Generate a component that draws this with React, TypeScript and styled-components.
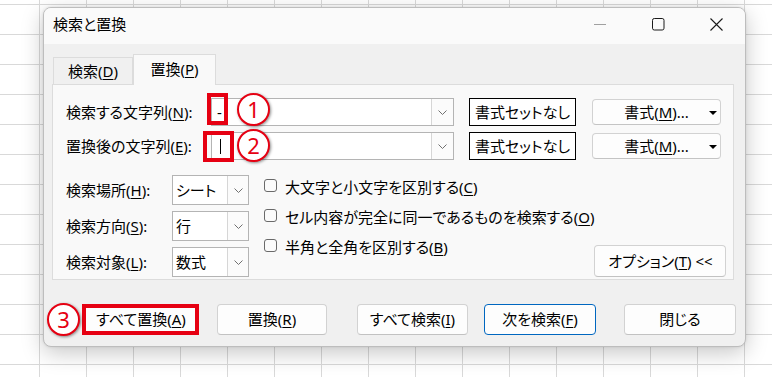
import styled, { createGlobalStyle } from 'styled-components'

const GlobalStyle = createGlobalStyle`
  html, body {
    margin: 0;
  }
  body {
    width: 772px;
    height: 377px;
    overflow: hidden;
    background-color: #fff;
    background-image:
      linear-gradient(to right, #d9d9d9 1px, transparent 1px),
      linear-gradient(to bottom, #d9d9d9 1px, transparent 1px);
    background-size: 47px 100%, 100% 30px;
    background-position: 39px 0, 0 4px;
    font-family: "Noto Sans", "Noto Sans CJK JP", sans-serif;
    font-size: 15px;
    font-feature-settings: "palt";
    color: #000;
  }
  #root {
    padding: 7px 0 0 43px;
  }
`

const RED = '#e60012'

const Dialog = styled.div`
  width: 703px;
  height: 340px;
  box-sizing: border-box;
  border: 1px solid #bdbdbd;
  border-radius: 8px;
  background: #f0f0f0;
  box-shadow: 0 6px 22px rgba(0, 0, 0, 0.22), 0 0 3px rgba(0, 0, 0, 0.1);
  overflow: hidden;
  display: flex;
  flex-direction: column;
`

const TitleBar = styled.div`
  flex: none;
  height: 36px;
  display: flex;
  align-items: center;
  padding: 0 0 3px 9px;
  box-sizing: border-box;
  background: #fafafa;
`

const Title = styled.div`
  flex: 1;
  line-height: 1;
`

const Caption = styled.div`
  width: 58px;
  height: 100%;
  display: flex;
  align-items: center;
  justify-content: center;
`

const Body = styled.div`
  flex: 1;
  padding: 10px 11px 11px 8px;
`

const TabStrip = styled.div`
  position: relative;
  z-index: 1;
  display: flex;
  align-items: flex-end;
  height: 31px;
  margin-bottom: -1px;
  padding-left: 1px;
`

const Tab = styled.div<{ $active?: boolean }>`
  width: ${(p) => (p.$active ? 83 : 80)}px;
  height: ${(p) => (p.$active ? 31 : 27)}px;
  margin-bottom: ${(p) => (p.$active ? 0 : 1)}px;
  box-sizing: border-box;
  display: flex;
  align-items: center;
  justify-content: center;
  border: 1px solid #dcdcdc;
  border-bottom: none;
  background: ${(p) => (p.$active ? '#f9f9f9' : '#f0f0f0')};
  line-height: 1;
  padding-bottom: ${(p) => (p.$active ? 1 : 0)}px;
`

const Key = styled.span`
  text-decoration: underline;
  text-underline-offset: 2px;
  text-decoration-thickness: 1px;
`

const Panel = styled.div`
  height: 196px;
  box-sizing: border-box;
  border: 1px solid #dcdcdc;
  background: #f9f9f9;
  padding: 13px 12px 0 13px;
`

const FieldRow = styled.div`
  display: flex;
  align-items: center;
  height: 28px;

  & + & {
    margin-top: 6px;
  }
`

const Label = styled.div<{ $w: number }>`
  flex: none;
  width: ${(p) => p.$w}px;
  white-space: nowrap;
  line-height: 1;
`

const Combo = styled.div<{ $w: number; $h: number }>`
  position: relative;
  flex: none;
  width: ${(p) => p.$w}px;
  height: ${(p) => p.$h}px;
  box-sizing: border-box;
  border: 1px solid #b4b4b4;
  background: #fff;
  display: flex;
`

const ComboText = styled.div<{ $pad: number }>`
  flex: 1;
  display: flex;
  align-items: center;
  padding-left: ${(p) => p.$pad}px;
  line-height: 1;
`

const ComboArrow = styled.div<{ $w: number }>`
  width: ${(p) => p.$w}px;
  border-left: 1px solid #d6d6d6;
  background: #fbfbfb;
  display: flex;
  align-items: center;
  justify-content: center;
`

const Caret = styled.span`
  width: 1px;
  height: 15px;
  background: #000;
`

const PlainButton = styled.div`
  flex: none;
  width: 107px;
  height: 28px;
  margin-left: 15px;
  box-sizing: border-box;
  border: 1px solid #000;
  background: #fff;
  display: flex;
  align-items: center;
  justify-content: center;
  line-height: 1;
`

const MenuButton = styled.div`
  position: relative;
  flex: none;
  width: 129px;
  height: 26px;
  margin-left: 16px;
  box-sizing: border-box;
  border: 1px solid #d2d2d2;
  border-bottom-color: #c4c4c4;
  border-radius: 4px;
  background: #fdfdfd;
  display: flex;
  align-items: center;
  justify-content: center;
  line-height: 1;

  svg {
    position: absolute;
    right: 3px;
    top: 11px;
  }
`

const Lower = styled.div`
  display: flex;
  margin-top: 15px;
  height: 102px;
`

const SelectCol = styled.div`
  display: flex;
  flex-direction: column;
  gap: 6px;
`

const SelectRow = styled.div`
  display: flex;
  align-items: center;
  height: 30px;
`

const CheckCol = styled.div`
  display: flex;
  flex-direction: column;
  margin: -5px 0 0 15px;
`

const CheckRow = styled.div`
  display: flex;
  align-items: center;
  gap: 8px;
  height: 30px;
  line-height: 1;
  white-space: nowrap;

  span:last-child {
    padding-top: 4px;
  }
`

const CheckBox = styled.span`
  flex: none;
  width: 13px;
  height: 13px;
  box-sizing: border-box;
  border: 1px solid #6a6a6a;
  border-radius: 3px;
  background: #fbfbfb;
`

const PushButton = styled.div<{ $w: number; $h?: number; $ml?: number; $default?: boolean }>`
  position: relative;
  flex: none;
  width: ${(p) => p.$w}px;
  height: ${(p) => p.$h ?? 31}px;
  margin-left: ${(p) => p.$ml ?? 0}px;
  box-sizing: border-box;
  border: 1px solid ${(p) => (p.$default ? '#0067c0' : '#d2d2d2')};
  border-bottom-color: ${(p) => (p.$default ? '#0067c0' : '#c2c2c2')};
  border-radius: 4px;
  background: #fdfdfd;
  display: flex;
  align-items: center;
  justify-content: center;
  line-height: 1;
  white-space: nowrap;
`

const OptionsButton = styled(PushButton)`
  margin-left: auto;
  align-self: flex-end;
`

const ButtonRow = styled.div`
  display: flex;
  margin-top: 24px;
  height: 31px;
`

const Highlight = styled.span<{ $l: number; $t: number; $w: number; $h: number }>`
  position: absolute;
  left: ${(p) => p.$l}px;
  top: ${(p) => p.$t}px;
  width: ${(p) => p.$w}px;
  height: ${(p) => p.$h}px;
  box-sizing: border-box;
  border: 4px solid ${RED};
  pointer-events: none;
`

const Badge = styled.span<{ $l: number; $t: number }>`
  position: absolute;
  left: ${(p) => p.$l}px;
  top: ${(p) => p.$t}px;
  width: 33px;
  height: 33px;
  box-sizing: border-box;
  border-radius: 50%;
  border: 2px solid ${RED};
  background: #fff;
  box-shadow: 1px 1px 3px rgba(0, 0, 0, 0.45);
  color: ${RED};
  font-family: "Noto Sans", sans-serif;
  font-size: 22px;
  line-height: 1;
  display: flex;
  align-items: center;
  justify-content: center;
  padding-bottom: 1px;
`

const Chevron = () => (
  <svg width="9" height="5" viewBox="0 0 9 5">
    <path d="M0.5 0.5l4 4 4-4" fill="none" stroke="#707070" strokeWidth="1" />
  </svg>
)

const DropTriangle = () => (
  <svg width="8" height="4" viewBox="0 0 8 4">
    <path d="M0 0h8L4 4z" fill="#000" />
  </svg>
)

function Select({ value, children }: { value?: string; children?: React.ReactNode }) {
  return (
    <Combo $w={77} $h={30}>
      <ComboText $pad={3}>{value}</ComboText>
      <ComboArrow $w={20}>
        <Chevron />
      </ComboArrow>
      {children}
    </Combo>
  )
}

const options = [
  { text: '大文字と小文字を区別する', key: 'C' },
  { text: 'セル内容が完全に同一であるものを検索する', key: 'O' },
  { text: '半角と全角を区別する', key: 'B' },
]

const selects = [
  { label: '検索場所', key: 'H', value: 'シート' },
  { label: '検索方向', key: 'S', value: '行' },
  { label: '検索対象', key: 'L', value: '数式' },
]

export default function App() {
  return (
    <>
      <GlobalStyle />
      <Dialog>
        <TitleBar>
          <Title>検索と置換</Title>
          <Caption>
            <svg width="12" height="2" viewBox="0 0 12 2">
              <line x1="0" y1="0.5" x2="12" y2="0.5" stroke="#a0a0a0" />
            </svg>
          </Caption>
          <Caption>
            <svg width="13" height="13" viewBox="0 0 13 13">
              <rect x="0.5" y="0.5" width="11.5" height="11.5" rx="1.8" fill="none" stroke="#1a1a1a" />
            </svg>
          </Caption>
          <Caption>
            <svg width="13" height="13" viewBox="0 0 13 13">
              <path d="M0.5 0.5l12 12M12.5 0.5l-12 12" stroke="#1a1a1a" strokeWidth="1.1" />
            </svg>
          </Caption>
        </TitleBar>

        <Body>
          <TabStrip>
            <Tab>
              検索(<Key>D</Key>)
            </Tab>
            <Tab $active>
              置換(<Key>P</Key>)
            </Tab>
          </TabStrip>

          <Panel>
            <FieldRow>
              <Label $w={145}>
                検索する文字列(<Key>N</Key>):
              </Label>
              <Combo $w={243} $h={28}>
                <ComboText $pad={5}>-</ComboText>
                <ComboArrow $w={21}>
                  <Chevron />
                </ComboArrow>
                <Highlight $l={-5} $t={-6} $w={21} $h={32} />
                <Badge $l={25} $t={-6}>1</Badge>
              </Combo>
              <PlainButton>書式セットなし</PlainButton>
              <MenuButton>
                書式(<Key>M</Key>)...
                <DropTriangle />
              </MenuButton>
            </FieldRow>
            <FieldRow>
              <Label $w={145}>
                置換後の文字列(<Key>E</Key>):
              </Label>
              <Combo $w={243} $h={28}>
                <ComboText $pad={8}>
                  <Caret />
                </ComboText>
                <ComboArrow $w={21}>
                  <Chevron />
                </ComboArrow>
                <Highlight $l={-9} $t={-2} $w={31} $h={31} />
                <Badge $l={25} $t={-4}>2</Badge>
              </Combo>
              <PlainButton>書式セットなし</PlainButton>
              <MenuButton>
                書式(<Key>M</Key>)...
                <DropTriangle />
              </MenuButton>
            </FieldRow>

            <Lower>
              <SelectCol>
                {selects.map((s) => (
                  <SelectRow key={s.key}>
                    <Label $w={106}>
                      {s.label}(<Key>{s.key}</Key>):
                    </Label>
                    <Select value={s.value} />
                  </SelectRow>
                ))}
              </SelectCol>

              <CheckCol>
                {options.map((o) => (
                  <CheckRow key={o.key}>
                    <CheckBox />
                    <span>
                      {o.text}(<Key>{o.key}</Key>)
                    </span>
                  </CheckRow>
                ))}
              </CheckCol>

              <OptionsButton $w={132} $h={32}>
                オプション(<Key>T</Key>) &lt;&lt;
              </OptionsButton>
            </Lower>
          </Panel>

          <ButtonRow>
            <PushButton $w={114} $ml={32}>
              すべて置換(<Key>A</Key>)
              <Highlight $l={-3} $t={-1} $w={117} $h={31} />
              <Badge $l={-38} $t={-2}>3</Badge>
            </PushButton>
            <PushButton $w={110} $ml={19}>
              置換(<Key>R</Key>)
            </PushButton>
            <PushButton $w={111} $ml={30}>
              すべて検索(<Key>I</Key>)
            </PushButton>
            <PushButton $w={112} $ml={16} $default>
              次を検索(<Key>F</Key>)
            </PushButton>
            <PushButton $w={112} $ml={28}>
              閉じる
            </PushButton>
          </ButtonRow>
        </Body>
      </Dialog>
    </>
  )
}
